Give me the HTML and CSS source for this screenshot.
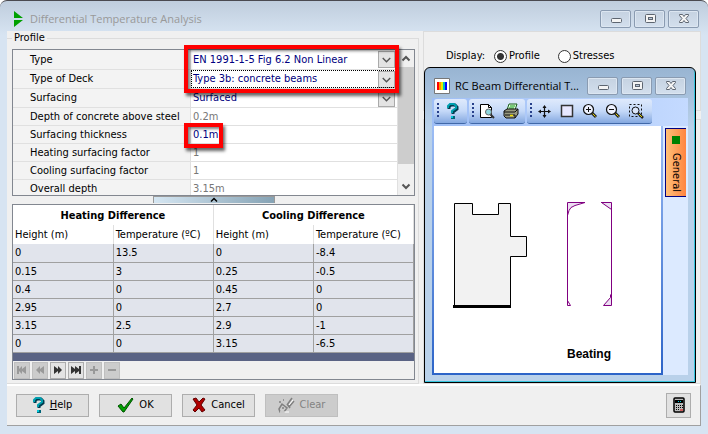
FILE: index.html
```html
<!DOCTYPE html>
<html lang="en">
<head>
  <meta charset="UTF-8">
  <meta name="viewport" content="width=device-width, initial-scale=1.0">
  <title>Differential Temperature Analysis</title>
  <link rel="stylesheet" href="styles.css">
</head>
<body>
  <!-- shared icons -->
  <svg class="defs" width="0" height="0">
    <symbol id="i-min" viewBox="0 0 12 12"><rect x="1.5" y="5.5" width="10" height="4" rx="1" fill="#f4f4f4" stroke="#5d6570"/></symbol>
    <symbol id="i-max" viewBox="0 0 12 12"><rect x="1.5" y="1.5" width="10" height="8" rx="1" fill="#f4f4f4" stroke="#5d6570"/><rect x="4.5" y="4.5" width="4" height="2" fill="#b9c8da" stroke="#5d6570"/></symbol>
    <symbol id="i-close" viewBox="0 0 12 12"><path d="M1.500 1.500h3l1.500 2 1.500-2h3v1l-2.500 3 2.500 3v1h-3l-1.500-2-1.500 2h-3v-1l2.500-3-2.500-3z" fill="#f4f4f4" stroke="#5d6570"/></symbol>
    <symbol id="i-help" viewBox="0 0 12 16"><path d="M2 6V4l2-2h4l2 2v2L6 9v2" fill="none" stroke="#003c50" stroke-width="3"/><path d="M1 5V3l2-2h4l2 2v2L5 8v2" fill="none" stroke="#00a0b0" stroke-width="2"/><path d="M4 13h4v3H4z" fill="#006478"/><path d="M4 13h2v2H4z" fill="#00c8d8"/></symbol>
    <symbol id="i-chev" viewBox="0 0 16 16"><path d="M4 6.500l4 4 4-4" fill="none" stroke="#555" stroke-width="1.500"/></symbol>
    <symbol id="i-up" viewBox="0 0 16 16"><path d="M4.500 10L8 6.500 11.500 10" fill="none" stroke="#555" stroke-width="2"/></symbol>
    <symbol id="i-down" viewBox="0 0 16 16"><path d="M4.500 6L8 9.500 11.500 6" fill="none" stroke="#555" stroke-width="2"/></symbol>
    <symbol id="i-lens" viewBox="0 0 16 16"><path d="M10 10l4 4" stroke="#222" stroke-width="3"/><path d="M10.500 10.500l3 3" stroke="#e6d800" stroke-width="1"/><circle cx="6.500" cy="6.500" r="5" fill="#eef2ff" stroke="#111" stroke-width="1.200"/></symbol>
  </svg>

  <div class="window">
    <header class="titlebar">
      <svg class="logo" width="9" height="16" viewBox="0 0 9 16"><path d="M0 0l9 7H0zM0 9h9l-9 7z" fill="#00a000"/></svg>
      <h1>Differential Temperature Analysis</h1>
      <div class="win-buttons">
        <button aria-label="Minimise"><svg width="12" height="12"><use href="#i-min"/></svg></button>
        <button aria-label="Maximise"><svg width="12" height="12"><use href="#i-max"/></svg></button>
        <button aria-label="Close"><svg width="12" height="12"><use href="#i-close"/></svg></button>
      </div>
    </header>

    <main class="content">
      <fieldset class="profile">
        <legend>Profile</legend>

        <div class="props">
          <div class="prop-list">
            <div class="prop prop-tall"><label for="type">Type</label>
              <div class="value"><select id="type"><option>EN 1991-1-5 Fig 6.2 Non Linear</option></select><svg class="arrow" width="16" height="16"><use href="#i-chev"/></svg></div></div>
            <div class="prop prop-select"><label for="deck">Type of Deck</label>
              <div class="value focus"><select id="deck"><option>Type 3b: concrete beams</option></select><svg class="arrow" width="16" height="16"><use href="#i-chev"/></svg></div></div>
            <div class="prop prop-select"><label for="surfacing">Surfacing</label>
              <div class="value"><select id="surfacing"><option>Surfaced</option></select><svg class="arrow" width="16" height="16"><use href="#i-chev"/></svg></div></div>
            <div class="prop"><label for="depth">Depth of concrete above steel</label>
              <div class="value"><input id="depth" value="0.2m" disabled></div></div>
            <div class="prop"><label for="thickness">Surfacing thickness</label>
              <div class="value"><input id="thickness" value="0.1m"></div></div>
            <div class="prop"><label for="heating">Heating surfacing factor</label>
              <div class="value"><input id="heating" value="1" disabled></div></div>
            <div class="prop"><label for="cooling">Cooling surfacing factor</label>
              <div class="value"><input id="cooling" value="1" disabled></div></div>
            <div class="prop"><label for="overall">Overall depth</label>
              <div class="value"><input id="overall" value="3.15m" disabled></div></div>
          </div>
          <div class="scrollbar">
            <svg width="16" height="17" viewBox="0 0 16 16"><use href="#i-up"/></svg>
            <div class="thumb"></div>
            <svg width="16" height="17" viewBox="0 0 16 16"><use href="#i-down"/></svg>
          </div>
          <div class="mark mark-type"></div>
          <div class="mark mark-thickness"></div>
        </div>

        <div class="splitter"><svg width="8" height="5" viewBox="0 0 8 5"><path d="M1 4.500l3-3 3 3" fill="none" stroke="#000" stroke-width="1.500"/></svg></div>

        <div class="results">
          <table>
            <thead>
              <tr class="groups"><th colspan="2">Heating Difference</th><th colspan="2">Cooling Difference</th></tr>
              <tr class="units"><th>Height (m)</th><th>Temperature (ºC)</th><th>Height (m)</th><th>Temperature (ºC)</th></tr>
            </thead>
            <tbody>
              <tr><td>0</td><td>13.5</td><td>0</td><td>-8.4</td></tr>
              <tr><td>0.15</td><td>3</td><td>0.25</td><td>-0.5</td></tr>
              <tr><td>0.4</td><td>0</td><td>0.45</td><td>0</td></tr>
              <tr><td>2.95</td><td>0</td><td>2.7</td><td>0</td></tr>
              <tr><td>3.15</td><td>2.5</td><td>2.9</td><td>-1</td></tr>
              <tr><td>0</td><td>0</td><td>3.15</td><td>-6.5</td></tr>
            </tbody>
          </table>
          <div class="filler"></div>
          <div class="navigator">
            <button disabled aria-label="First"><svg width="12" height="10"><path d="M1 1h2v3l3-3v3l4-3v8L6 6v3L3 6v3H1z"/></svg></button>
            <button disabled aria-label="Previous"><svg width="12" height="10"><path d="M6 1v3l4-3v8L6 6v3L2 5z"/></svg></button>
            <button aria-label="Next"><svg width="12" height="10"><path d="M2 1l4 3V1l4 4-4 4V6L2 9z"/></svg></button>
            <button aria-label="Last"><svg width="12" height="10"><path d="M1 1l4 3V1l4 3V1h2v8H9V6L5 9V6L1 9z"/></svg></button>
            <button disabled aria-label="Add"><svg width="12" height="10"><path d="M5 1h2v3h3v2H7v3H5V6H2V4h3z"/></svg></button>
            <button disabled aria-label="Remove"><svg width="12" height="10"><path d="M2 4h8v2H2z"/></svg></button>
          </div>
        </div>
      </fieldset>

      <section class="display">
        <div class="display-top">
          <span>Display:</span>
          <label><input type="radio" name="display" checked>Profile</label>
          <label><input type="radio" name="display">Stresses</label>
        </div>
        <div class="display-rest"></div>
      </section>

      <div class="viewer">
        <header class="viewer-title">
          <svg width="16" height="16" viewBox="0 0 16 16"><path d="M.5.500h15v15H.500z" fill="#fff" stroke="#777"/><path d="M3 4h2v8H3z" fill="#f00"/><path d="M5 4h2v8H5z" fill="#ff9000"/><path d="M7 4h2v8H7z" fill="#e0f000"/><path d="M9 4h2v8H9z" fill="#00c0c0"/><path d="M11 4h2v8h-2z" fill="#00f"/></svg>
          <h2>RC Beam Differential T...</h2>
          <div class="win-buttons">
            <button aria-label="Minimise"><svg width="12" height="12"><use href="#i-min"/></svg></button>
            <button aria-label="Maximise"><svg width="12" height="12"><use href="#i-max"/></svg></button>
            <button aria-label="Close"><svg width="12" height="12"><use href="#i-close"/></svg></button>
          </div>
        </header>
        <div class="viewer-body">
          <div class="toolbar">
            <div class="tools tools-help">
              <button aria-label="Help"><svg width="12" height="16"><use href="#i-help"/></svg></button>
            </div>
            <div class="tools tools-print">
              <button aria-label="Preview"><svg width="16" height="16" viewBox="0 0 16 16"><path d="M1.500 1.500h8l3 3v10h-11z" fill="#fff" stroke="#000"/><path d="M9.500 1.500v3h3" fill="none" stroke="#000"/><path d="M11 11l4 4" stroke="#333" stroke-width="2"/><circle cx="9.500" cy="9" r="3" fill="#8ed8e0" stroke="#666"/></svg></button>
              <button aria-label="Print"><svg width="16" height="16" viewBox="0 0 16 16"><path d="M6 1h8l-2 6H4z" fill="#dff5df" stroke="#186018"/><path d="M7 3h5M6 5h5" stroke="#10a010"/><path d="M1 8l3-2h11v5l-3 4H3l-2-2z" fill="#999a80" stroke="#111"/><path d="M1 9h11l3-3M2 12h10v3" fill="none" stroke="#111"/><path d="M7 12.500h3" stroke="#f0e000" stroke-width="1.500"/></svg></button>
            </div>
            <div class="tools tools-zoom">
              <button aria-label="Pan"><svg width="16" height="16" viewBox="0 0 16 16"><path d="M8.500 3v11M3 8.500h11" stroke="#111" stroke-width="1.200"/><path d="M8.500 2l2 3h-4zM8.500 15l2-3h-4zM2 8.500l3-2v4zM15 8.500l-3-2v4z" fill="#111"/></svg></button>
              <button aria-label="Fit"><svg width="16" height="16" viewBox="0 0 16 16"><path d="M2.500 2.500h11v11h-11z" fill="#e8e8ff" stroke="#333" stroke-width="1.500"/></svg></button>
              <button aria-label="Zoom in"><svg width="16" height="16" viewBox="0 0 16 16"><use href="#i-lens"/><path d="M4 6.500h5M6.500 4v5" stroke="#111"/></svg></button>
              <button aria-label="Zoom out"><svg width="16" height="16" viewBox="0 0 16 16"><use href="#i-lens"/><path d="M4 6.500h5" stroke="#111"/></svg></button>
              <button aria-label="Zoom window"><svg width="16" height="16" viewBox="0 0 16 16"><path d="M1.500 1.500h12v12h-12z" fill="none" stroke="#111" stroke-dasharray="2 2"/><path d="M10 10l5 5" stroke="#222" stroke-width="2.500"/><path d="M11 11l3 3" stroke="#e6d800"/><circle cx="7.500" cy="7.500" r="3.500" fill="#dbe6fa" stroke="#111"/></svg></button>
            </div>
          </div>
          <div class="stage">
            <div class="canvas">
              <svg width="227" height="247" viewBox="0 0 227 247">
                <path d="M20.500 77.500h18v11h26v-11h12v33h16v20h-16v50h-56z" fill="#f2f2f2" stroke="#000"/>
                <path d="M19 180.500h58" stroke="#000" stroke-width="3"/>
                <path d="M133.500 76.500h17l-10 3-4 2-2 3-1 5z" fill="#ecdff2"/>
                <path d="M177.500 76.500h-10l10 7zM177.500 179.500h-8l7-8v-3z" fill="#ecdff2"/>
                <path d="M151 76.500h-17.500v103h3l-3-5M151 76.500l-10 3-4 2-2 3-1.500 5M167 76.500h10.500v103h-8l7-8v-3M167.500 76.500l10 7" fill="none" stroke="#800080"/>
                <text x="133" y="232">Beating</text>
              </svg>
            </div>
            <div class="side"><button class="tab"><i></i>General</button></div>
          </div>
        </div>
      </div>
    </main>

    <footer class="actions">
      <button><svg width="12" height="16"><use href="#i-help"/></svg><span><u>H</u>elp</span></button>
      <button><svg width="17" height="16" viewBox="0 0 17 16"><path d="M1 9l3-2 3 4 8-10 1 1-9 13H6z" fill="#00a000" stroke="#005000"/></svg>OK</button>
      <button><svg width="14" height="16" viewBox="0 0 14 16"><path d="M1 2l3-1 3 4 4-4 2 1-4 6 4 5-3 2-3-4-4 4-2-2 4-5z" fill="#b00000" stroke="#600000"/></svg>Cancel</button>
      <button disabled><svg width="17" height="16" viewBox="0 0 17 16"><path d="M9 8l5-7M11 10l5-6M9 7l3 4M1 12l3-5 5 4-3 4H2zM1 5h2M5 3h1M4 11h2" fill="none" stroke="#808080" stroke-width="1.500"/><path d="M11 8l4-5M2 15h9" stroke="#fff"/></svg>Clear</button>
      <button class="calc" aria-label="Calculator"><svg width="12" height="16" viewBox="0 0 12 16"><rect x="1" y="1" width="10" height="14" rx="1" fill="#bbb" stroke="#000" stroke-width="1.500"/><path d="M2 3h8v3H2z" fill="#000"/><path d="M5 4.500h4" stroke="#00d0e0" stroke-dasharray="1 1"/><path d="M3 8.500h7M3 10.500h7M3 12.500h4" stroke="#000" stroke-dasharray="1 1"/><path d="M7 13h3" stroke="#e00000"/></svg></button>
    </footer>
  </div>
</body>
</html>
```
FILE: styles.css
```css
* {
  box-sizing: border-box;
}
body {
  margin: 0;
  background: #fff;
  color: #000;
  font: 11px/16px "DejaVu Sans Condensed", "DejaVu Sans", sans-serif;
}
button, input, select {
  margin: 0;
  padding: 0;
  border: 0;
  background: none;
  color: inherit;
  font: inherit;
}
svg {
  display: block;
  flex: none;
}
.defs {
  position: absolute;
}

/* outer window */
.window {
  display: flex;
  flex-direction: column;
  min-height: 100vh;
  padding: 0 7px 8px;
  border-top: 1px solid #4a4a50;
  border-bottom: 1px solid #4a4a50;
  border-radius: 7px 7px 0 0;
  background: linear-gradient(#bfcddd, #d7e4f2 34px);
}
.titlebar {
  display: flex;
  align-items: center;
  height: 30px;
  padding: 6px 2px 0 7px;
}
h1, h2 {
  flex: 1;
  margin: 0;
  font: 11px/18px "Open Sans", "Noto Sans", sans-serif;
  white-space: nowrap;
}
h1 {
  margin-left: 7px;
  color: #999;
}
.win-buttons {
  display: flex;
  gap: 3px;
}
.win-buttons button {
  display: flex;
  align-items: center;
  justify-content: center;
  width: 31px;
  height: 18px;
  border: 1px solid #8a9bb1;
  border-radius: 2px;
  background: linear-gradient(#c5d2e1, #d3dfed);
  box-shadow: inset 0 0 0 1px #dce6f1;
}
.content {
  position: relative;
  display: flex;
  flex: 1;
  background: #f0f0f0;
}

/* profile group */
.profile {
  flex: 0 0 412px;
  min-width: 0;
  margin: 0;
  padding: 4px 3px 3px 5px;
  border: 1px solid #dcdcdc;
  border-left: 0;
}
.profile legend {
  padding: 0 2px;
  line-height: 14px;
}
.props {
  position: relative;
  display: flex;
  height: 147px;
  border: 1px solid #828790;
  background: #fff;
}
.prop-list {
  flex: 1;
  overflow: hidden;
}
.prop {
  display: flex;
  height: 18px;
  border-bottom: 1px solid #e0e0e0;
}
.prop-select {
  height: 19px;
}
.prop-tall {
  height: 20px;
}
.prop label {
  flex: 0 0 178px;
  display: flex;
  align-items: center;
  padding-left: 17px;
  border-right: 1px solid #e0e0e0;
  background: #f3f3f3;
}
.value {
  flex: 1;
  display: flex;
  align-items: center;
  padding: 0 2px;
  border-right: 1px solid #e0e0e0;
  color: #000080;
}
.value select, .value input {
  flex: 1;
  min-width: 0;
  height: 16px;
  appearance: none;
  outline: 0;
}
.value input:disabled {
  color: #777;
}
.focus {
  outline: 1px dotted #000;
  outline-offset: -1px;
}
.arrow {
  width: 17px;
  height: 17px;
  border: 1px solid #aaa;
  background: #e3e3e3;
}
.scrollbar {
  display: flex;
  flex-direction: column;
  width: 16px;
  background: #f0f0f0;
}
.thumb {
  flex: 0 0 97px;
  margin-bottom: auto;
  background: #cdcdcd;
}
.mark {
  position: absolute;
  border: 4px solid #f00;
  box-shadow: 2px 3px 3px rgba(0, 0, 0, .6), inset 2px 2px 3px rgba(0, 0, 0, .5);
  pointer-events: none;
}
.mark-type {
  top: -5px;
  left: 171px;
  right: 15px;
  height: 48px;
}
.mark-thickness {
  top: 73px;
  left: 171px;
  width: 39px;
  height: 25px;
}
.splitter {
  display: flex;
  justify-content: center;
  width: 122px;
  height: 7px;
  margin: 0 auto 1px;
  border: 1px solid #999;
  border-bottom: 0;
  background: linear-gradient(90deg, #d5e6f2, #86a3b5);
}

/* results table */
.results {
  border: 1px solid #828790;
  background: #f0f0f0;
}
table {
  width: 100%;
  border-collapse: collapse;
  table-layout: fixed;
}
th, td {
  height: 18px;
  padding: 0 2px;
  line-height: 17px;
  text-align: left;
}
td {
  border: 1px solid #a0a0a0;
  border-left-width: 0;
  border-top-width: 0;
  background: #e1e4ec;
}
th {
  border-right: 1px solid #e0e0e0;
  background: #fff;
}
.groups th {
  height: 20px;
  text-align: center;
}
.units th {
  height: 19px;
  font-weight: normal;
}
.filler {
  height: 8px;
  background: #5a6384;
}
.navigator {
  display: flex;
  gap: 2px;
  padding: 1px 1px 0;
}
.navigator button {
  display: flex;
  align-items: center;
  justify-content: center;
  width: 16px;
  height: 17px;
  border: 1px solid #adadad;
  background: #e3e3e3;
  fill: #333;
}
.navigator button:disabled {
  border-color: #bfbfbf;
  background: #ccc;
  fill: #999;
}

/* display options */
.display {
  flex: 1;
  display: flex;
  flex-direction: column;
  gap: 8px;
  margin-left: 4px;
}
.display-top {
  display: flex;
  align-items: center;
  height: 80px;
  padding: 0 0 30px 22px;
  border: 1px solid #dcdcdc;
}
.display-top span {
  margin-right: 9px;
}
.display-top label {
  display: flex;
  align-items: center;
  gap: 2px;
  margin-right: 18px;
}
.display-top input {
  width: 13px;
  height: 13px;
  border: 1px solid #333;
  border-radius: 50%;
  background: #fff;
  appearance: none;
}
.display-top input:checked {
  background: radial-gradient(#333 3px, #fff 4px);
}
.display-rest {
  flex: 1;
  border: 1px solid #dcdcdc;
}

/* floating viewer window */
.viewer {
  position: absolute;
  top: 36px;
  right: 5px;
  bottom: 1px;
  width: 272px;
  display: flex;
  flex-direction: column;
  padding: 0 7px 7px;
  border: 1px solid #000;
  border-radius: 6px 6px 0 0;
  background: linear-gradient(#98b4d2, #b9d1ea 60px);
  box-shadow: inset -1px -1px 0 #35c5dd;
}
.viewer-title {
  display: flex;
  align-items: center;
  height: 30px;
  padding: 6px 2px 0;
}
.viewer-title h2 {
  margin-left: 5px;
}
.viewer-body {
  flex: 1;
  display: flex;
  flex-direction: column;
  background: #dceaff;
}
.toolbar {
  display: flex;
  gap: 2px;
  height: 28px;
  padding: 1px 2px 2px;
  background: linear-gradient(90deg, #9ebef5, #c4daff);
}
.tools {
  display: flex;
  align-items: center;
  height: 25px;
  border-bottom: 1px solid #4068a8;
  border-radius: 3px;
  background: linear-gradient(#dfeafc, #c5d9f8 50%, #84a8e0);
}
.tools::before {
  content: "";
  width: 2px;
  height: 15px;
  margin-left: 3px;
  background: repeating-linear-gradient(#27408b 0 2px, transparent 2px 4px);
}
.tools button {
  display: flex;
  align-items: center;
  justify-content: center;
  width: 23px;
  height: 22px;
}
.tools-help {
  width: 33px;
}
.tools-help button {
  margin-left: 2px;
}
.tools-print {
  width: 56px;
}
.tools-print button {
  margin-left: 1px;
}
.tools-zoom {
  width: 125px;
  padding-right: 2px;
}
.stage {
  flex: 1;
  display: flex;
}
.canvas {
  flex: 1;
  border: solid #2c64c8;
  border-width: 0 2px 2px;
  border-image: linear-gradient(#9ebef5, #2c64c8) 2;
  background: #fff;
}
.canvas text {
  font: bold 12px "Liberation Sans", Arial, sans-serif;
}
.side {
  width: 25px;
  padding: 2px 2px 0;
  background: #dceaff;
}
.tab {
  display: flex;
  align-items: center;
  gap: 9px;
  width: 21px;
  height: 69px;
  padding-top: 7px;
  border: 1px solid #000080;
  border-right: 0;
  background: linear-gradient(90deg, #ffc078, #ff8440);
  writing-mode: vertical-rl;
}
.tab i {
  width: 8px;
  height: 8px;
  background: #008000;
}

/* bottom buttons */
.actions {
  display: flex;
  align-items: center;
  gap: 10px;
  height: 42px;
  padding: 0 9px;
  border-top: 2px solid #fff;
  border-right: 1px solid #a0a0a0;
  border-bottom: 1px solid #a0a0a0;
  background: #f0f0f0;
}
.actions button {
  display: flex;
  align-items: center;
  justify-content: center;
  gap: 5px;
  width: 73px;
  height: 23px;
  border: 1px solid #adadad;
  background: #e1e1e1;
}
.actions button:disabled {
  border-color: #bfbfbf;
  background: #ccc;
  color: #838383;
}
.actions .calc {
  width: 25px;
  height: 25px;
  margin-left: auto;
}
```
